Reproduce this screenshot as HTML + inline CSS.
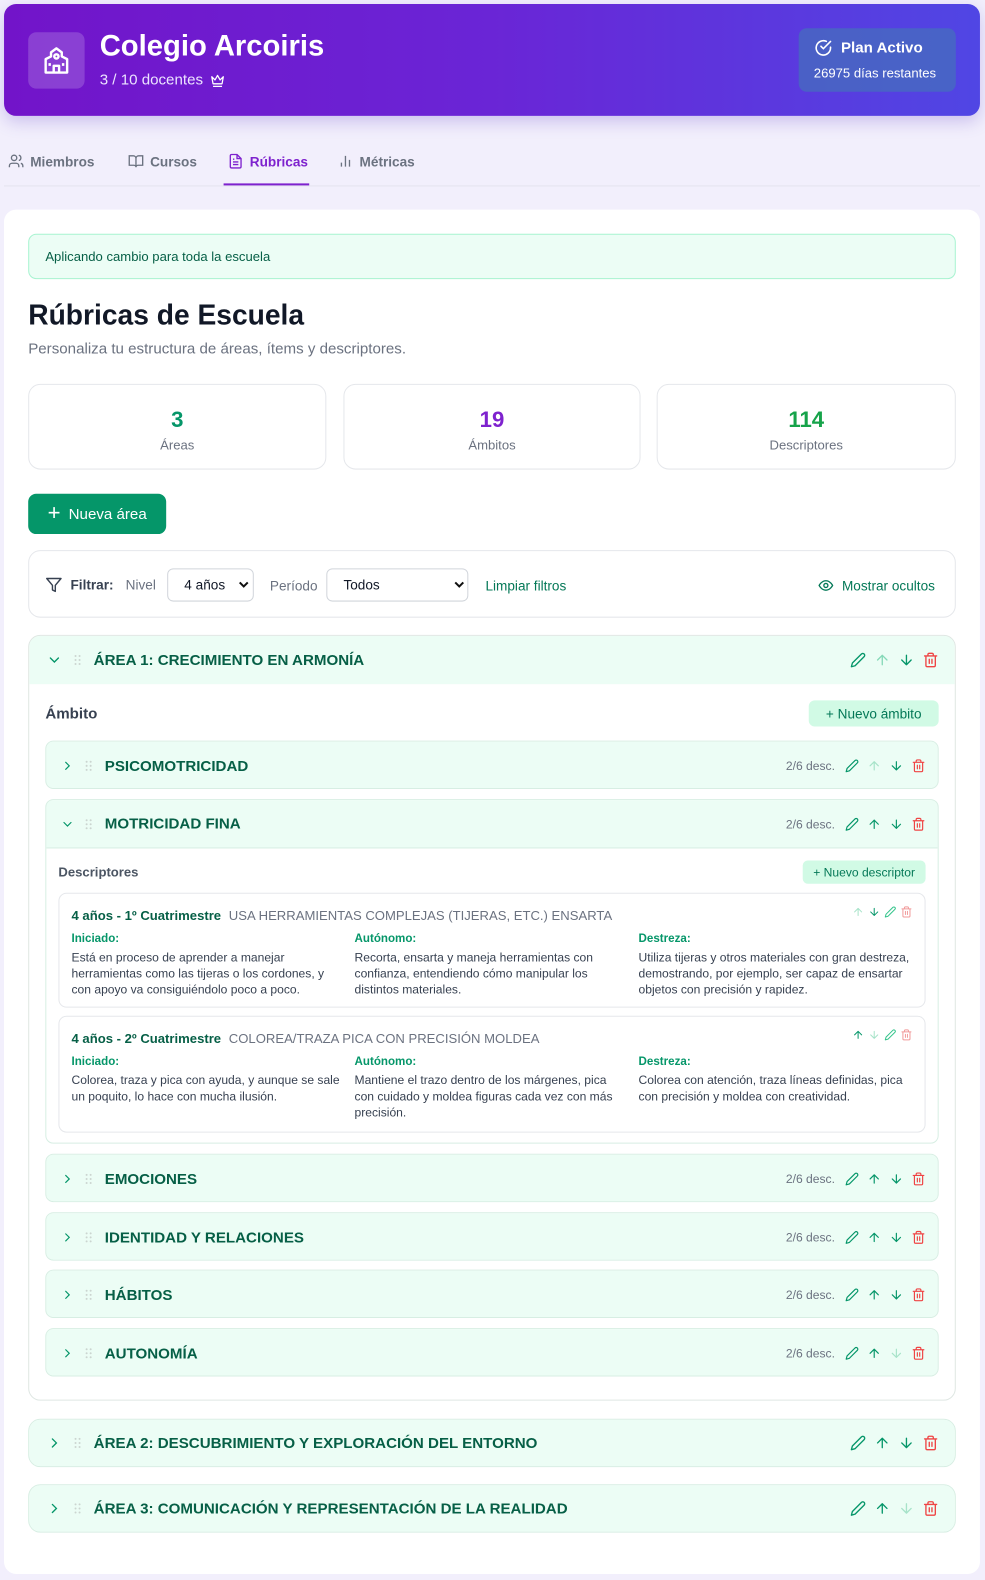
<!DOCTYPE html>
<html><head><meta charset="utf-8"><style>
*{box-sizing:border-box;margin:0;padding:0}
body{width:985px;height:1580px;background:#f2effc;font-family:"Liberation Sans",sans-serif;position:relative;overflow:hidden;color:#111827}
#w{position:absolute;left:0;top:0;width:978px;height:1568px;transform:scale(1.00716,1.00765);transform-origin:0 0}
.a{position:absolute}
.hdr{left:4px;top:4px;width:969px;height:111px;border-radius:12px;background:linear-gradient(90deg,#7214c9,#6a25d6 50%,#5046e4);box-shadow:0 6px 16px rgba(90,60,200,.25)}
.ib{left:24px;top:28px;width:56px;height:56px;border-radius:8px;background:rgba(255,255,255,.18);display:flex;align-items:center;justify-content:center}
.ttl{left:95px;top:26px;color:#fff;font-size:29px;font-weight:bold}
.sub{left:95px;top:67px;color:#ece4ff;font-size:15px;display:flex;gap:6px;align-items:center}
.plan{left:789px;top:24px;width:156px;height:63px;border-radius:8px;background:rgba(70,110,190,.75);color:#fff;padding:10px 15px}
.tabs{left:4px;top:140px;width:969px;height:45px;border-bottom:1px solid #e4e2ee}
.tab{position:absolute;top:12px;font-size:13.5px;color:#6b7280;display:flex;align-items:center;gap:6px;font-weight:bold}
.card{left:4px;top:208px;width:969px;height:1354px;background:#fff;border-radius:12px}
.box{border:1px solid #e5e7eb;border-radius:12px;background:#fff}
.stat{top:381px;height:85px;text-align:center}
.stat b{display:block;font-size:22px;margin-top:22px}
.stat span{display:block;font-size:13px;color:#6b7280;margin-top:4px}
.g{color:#065f46}
.hrow{display:flex;align-items:center;background:#ecfdf5;height:48px}
.t{font-size:15px;font-weight:bold;color:#065f46}
.ic{display:flex;gap:6px;align-items:center;position:absolute;right:12px}
.amb{position:absolute;left:45px;width:887px;border:1px solid #d7eee3;border-radius:8px;overflow:hidden}
.amb .hrow{position:relative}
.cnt{font-size:12px;color:#6b7280;margin-right:4px}
.dc{position:absolute;left:58px;width:861px;border:1px solid #e5e7eb;border-radius:8px}
.dc .h{position:absolute;left:12px;top:14px;font-size:13px}
.col{position:absolute;width:272px;font-size:12px;line-height:16px;color:#374151;top:37px}
.col i{font-style:normal;display:block;color:#059669;font-weight:bold;font-size:11.5px;margin-bottom:2px}
</style></head><body><div id="w">
<svg width="0" height="0" style="position:absolute"><defs>
<symbol id="pen" viewBox="0 0 24 24"><path d="M17 3a2.8 2.8 0 0 1 4 4L7.5 20.5 2 22l1.5-5.5Z" fill="none" stroke="currentColor" stroke-width="2" stroke-linecap="round" stroke-linejoin="round"/></symbol>
<symbol id="up" viewBox="0 0 24 24"><path d="M12 19V5M5 12l7-7 7 7" fill="none" stroke="currentColor" stroke-width="2" stroke-linecap="round" stroke-linejoin="round"/></symbol>
<symbol id="dn" viewBox="0 0 24 24"><path d="M12 5v14M19 12l-7 7-7-7" fill="none" stroke="currentColor" stroke-width="2" stroke-linecap="round" stroke-linejoin="round"/></symbol>
<symbol id="tr" viewBox="0 0 24 24"><path d="M3 6h18M19 6v14a2 2 0 0 1-2 2H7a2 2 0 0 1-2-2V6M8 6V4a2 2 0 0 1 2-2h4a2 2 0 0 1 2 2v2M10 11v6M14 11v6" fill="none" stroke="currentColor" stroke-width="2" stroke-linecap="round" stroke-linejoin="round"/></symbol>
<symbol id="chr" viewBox="0 0 24 24"><path d="M9 6l6 6-6 6" fill="none" stroke="currentColor" stroke-width="2" stroke-linecap="round"/></symbol>
<symbol id="chd" viewBox="0 0 24 24"><path d="M6 9l6 6 6-6" fill="none" stroke="currentColor" stroke-width="2" stroke-linecap="round"/></symbol>
<symbol id="grip" viewBox="0 0 8 12"><g fill="#cbd5d0"><circle cx="2" cy="2" r="1"/><circle cx="6" cy="2" r="1"/><circle cx="2" cy="6" r="1"/><circle cx="6" cy="6" r="1"/><circle cx="2" cy="10" r="1"/><circle cx="6" cy="10" r="1"/></g></symbol>
</defs></svg>

<div class="a hdr">
 <div class="a ib"><svg width="32" height="32" viewBox="0 0 24 24" fill="none" stroke="#fff" stroke-width="1.8" stroke-linejoin="round"><path d="M4 21V11l4-2V6l4-3 4 3v3l4 2v10Z"/><circle cx="12" cy="9" r="1.6"/><path d="M10 21v-5h4v5M7 14v2M17 14v2"/></svg></div>
 <div class="a ttl">Colegio Arcoiris</div>
 <div class="a sub">3 / 10 docentes <svg width="16" height="14" viewBox="0 0 24 22" fill="none" stroke="#fff" stroke-width="2" stroke-linejoin="round"><path d="M3 5l5 5 4-7 4 7 5-5-2 11H5Z M5 20h14"/></svg></div>
 <div class="a plan"><div style="display:flex;align-items:center;gap:8px;font-weight:bold;font-size:15px"><svg width="19" height="19" viewBox="0 0 24 24" fill="none" stroke="#fff" stroke-width="2" stroke-linecap="round"><path d="M21 11.1V12a9 9 0 1 1-5.3-8.2"/><path d="M21 4 12 13l-3-3"/></svg>Plan Activo</div><div style="font-size:13px;margin-top:8px">26975 días restantes</div></div>
</div>

<div class="a tabs">
 <div class="tab" style="left:4px"><svg width="16" height="16" viewBox="0 0 24 24" fill="none" stroke="#6b7280" stroke-width="2"><circle cx="9" cy="7" r="4"/><path d="M2 21v-2a4 4 0 0 1 4-4h6a4 4 0 0 1 4 4v2M16 3.1a4 4 0 0 1 0 7.8M22 21v-2a4 4 0 0 0-3-3.9"/></svg>Miembros</div>
 <div class="tab" style="left:123px"><svg width="16" height="16" viewBox="0 0 24 24" fill="none" stroke="#6b7280" stroke-width="2"><path d="M2 4h6a4 4 0 0 1 4 4v13a3 3 0 0 0-3-3H2ZM22 4h-6a4 4 0 0 0-4 4v13a3 3 0 0 1 3-3h7Z"/></svg>Cursos</div>
 <div class="tab" style="left:222px;color:#7e22ce"><svg width="16" height="16" viewBox="0 0 24 24" fill="none" stroke="#7e22ce" stroke-width="2"><path d="M14 2H6a2 2 0 0 0-2 2v16a2 2 0 0 0 2 2h12a2 2 0 0 0 2-2V8Z M14 2v6h6M16 13H8M16 17H8M10 9H8"/></svg>Rúbricas</div>
 <div class="a" style="left:218px;top:42px;width:85px;height:2px;background:#7e22ce"></div>
 <div class="tab" style="left:331px"><svg width="16" height="16" viewBox="0 0 24 24" fill="none" stroke="#6b7280" stroke-width="2"><path d="M6 20v-6M12 20V4M18 20v-10"/></svg>Métricas</div>
</div>

<div class="a card"></div>
<div class="a" style="left:28px;top:232px;width:921px;height:45px;background:#ecfdf5;border:1px solid #a7f3d0;border-radius:8px;font-size:13px;color:#065f46;padding:14px 16px">Aplicando cambio para toda la escuela</div>
<div class="a" style="left:28px;top:297px;font-size:28px;font-weight:bold">Rúbricas de Escuela</div>
<div class="a" style="left:28px;top:338px;font-size:15px;color:#6b7280">Personaliza tu estructura de áreas, ítems y descriptores.</div>

<div class="a box stat" style="left:28px;width:296px"><b style="color:#059669">3</b><span>Áreas</span></div>
<div class="a box stat" style="left:341px;width:295px"><b style="color:#7e22ce">19</b><span>Ámbitos</span></div>
<div class="a box stat" style="left:652px;width:297px"><b style="color:#16a34a">114</b><span>Descriptores</span></div>

<div class="a" style="left:28px;top:490px;width:137px;height:40px;background:#059669;border-radius:8px;color:#fff;font-size:15px;display:flex;align-items:center;justify-content:center;gap:8px"><span style="font-size:22px;line-height:1;margin-top:-3px">+</span>Nueva área</div>

<div class="a box" style="left:28px;top:546px;width:921px;height:67px"></div>
<div class="a" style="left:45px;top:572px;display:flex;align-items:center;gap:8px;font-size:13.5px">
 <svg width="17" height="17" viewBox="0 0 24 24" fill="none" stroke="#374151" stroke-width="2" stroke-linejoin="round"><path d="M22 3H2l8 9.5V19l4 2v-8.5Z"/></svg><b style="color:#374151">Filtrar:</b><span style="color:#6b7280;margin-left:4px">Nivel</span></div>
<div class="a" style="left:166px;top:564px;width:86px;height:33px;border:1px solid #d1d5db;border-radius:6px;font-size:13.5px;padding:8px 0 0 16px">4 años</div>
<div class="a" style="left:268px;top:574px;font-size:13.5px;color:#6b7280">Período</div>
<div class="a" style="left:324px;top:564px;width:141px;height:33px;border:1px solid #d1d5db;border-radius:6px;font-size:13.5px;padding:8px 0 0 16px">Todos</div>
<svg class="a" style="left:451px;top:576px" width="10" height="8" viewBox="0 0 10 8"><path d="M1 2l4 4 4-4" fill="none" stroke="#111" stroke-width="2"/></svg>
<svg class="a" style="left:237px;top:576px" width="10" height="8" viewBox="0 0 10 8"><path d="M1 2l4 4 4-4" fill="none" stroke="#111" stroke-width="2"/></svg>
<div class="a" style="left:482px;top:574px;font-size:13.5px;color:#047857">Limpiar filtros</div>
<div class="a" style="left:812px;top:573px;font-size:13.5px;color:#047857;display:flex;gap:8px;align-items:center"><svg width="16" height="16" viewBox="0 0 24 24" fill="none" stroke="#047857" stroke-width="2"><path d="M2 12s3.5-7 10-7 10 7 10 7-3.5 7-10 7S2 12 2 12Z"/><circle cx="12" cy="12" r="3"/></svg>Mostrar ocultos</div>

<div class="a" style="left:28px;top:630px;width:921px;height:760px;border:1px solid #dfe7e3;border-radius:12px;overflow:hidden;background:#fff">
 <div class="hrow" style="position:relative;padding-left:17px">
  <svg width="16" height="16" style="color:#059669"><use href="#chd"/></svg>
  <svg width="8" height="12" style="margin-left:11px"><use href="#grip"/></svg>
  <span class="t" style="margin-left:12px">ÁREA 1: CRECIMIENTO EN ARMONÍA</span>
  <div class="ic" style="right:16px;gap:8px"><svg width="16" height="16" style="color:#059669"><use href="#pen"/></svg><svg width="16" height="16" style="color:#86d9b8"><use href="#up"/></svg><svg width="16" height="16" style="color:#059669"><use href="#dn"/></svg><svg width="16" height="16" style="color:#ef4444"><use href="#tr"/></svg></div>
 </div>
</div>
<div class="a" style="left:45px;top:700px;font-size:15px;font-weight:bold;color:#374151">Ámbito</div>
<div class="a" style="left:803px;top:695px;width:129px;height:26px;background:#d1fae5;border-radius:6px;font-size:13.5px;color:#047857;display:flex;align-items:center;justify-content:center">+ Nuevo ámbito</div>

<div class="amb" style="top:735px;height:48px"><div class="hrow" style="padding-left:14px"><svg width="14" height="14" style="color:#059669"><use href="#chr"/></svg><svg width="8" height="12" style="margin-left:10px"><use href="#grip"/></svg><span class="t" style="margin-left:12px">PSICOMOTRICIDAD</span><div class="ic"><span class="cnt">2/6 desc.</span><svg width="14" height="14" style="color:#059669"><use href="#pen"/></svg><svg width="14" height="14" style="color:#a7e3c9;margin-left:2px"><use href="#up"/></svg><svg width="14" height="14" style="color:#059669;margin-left:2px"><use href="#dn"/></svg><svg width="14" height="14" style="color:#ef4444;margin-left:2px"><use href="#tr"/></svg></div></div></div>

<div class="amb" style="top:793px;height:342px;background:#fff"><div class="hrow" style="padding-left:14px;border-bottom:1px solid #d7eee3"><svg width="14" height="14" style="color:#059669"><use href="#chd"/></svg><svg width="8" height="12" style="margin-left:10px"><use href="#grip"/></svg><span class="t" style="margin-left:12px">MOTRICIDAD FINA</span><div class="ic"><span class="cnt">2/6 desc.</span><svg width="14" height="14" style="color:#059669"><use href="#pen"/></svg><svg width="14" height="14" style="color:#059669;margin-left:2px"><use href="#up"/></svg><svg width="14" height="14" style="color:#059669;margin-left:2px"><use href="#dn"/></svg><svg width="14" height="14" style="color:#ef4444;margin-left:2px"><use href="#tr"/></svg></div></div></div>
<div class="a" style="left:58px;top:858px;font-size:13px;font-weight:bold;color:#4b5563">Descriptores</div>
<div class="a" style="left:797px;top:854px;width:122px;height:23px;background:#d1fae5;border-radius:5px;font-size:12px;color:#047857;display:flex;align-items:center;justify-content:center">+ Nuevo descriptor</div>

<div class="dc" style="top:886px;height:114px">
 <div class="h"><b class="g">4 años - 1º Cuatrimestre</b> <span style="color:#6b7280;margin-left:4px">USA HERRAMIENTAS COMPLEJAS (TIJERAS, ETC.) ENSARTA</span></div>
 <div class="ic" style="top:12px;right:12px;gap:4px"><svg width="12" height="12" style="color:#a7e3c9"><use href="#up"/></svg><svg width="12" height="12" style="color:#059669"><use href="#dn"/></svg><svg width="12" height="12" style="color:#34c48b"><use href="#pen"/></svg><svg width="12" height="12" style="color:#f19999"><use href="#tr"/></svg></div>
 <div class="col" style="left:12px"><i>Iniciado:</i>Está en proceso de aprender a manejar herramientas como las tijeras o los cordones, y con apoyo va consiguiéndolo poco a poco.</div>
 <div class="col" style="left:293px"><i>Autónomo:</i>Recorta, ensarta y maneja herramientas con confianza, entendiendo cómo manipular los distintos materiales.</div>
 <div class="col" style="left:575px;width:278px"><i>Destreza:</i>Utiliza tijeras y otros materiales con gran destreza, demostrando, por ejemplo, ser capaz de ensartar objetos con precisión y rapidez.</div>
</div>
<div class="dc" style="top:1008px;height:116px">
 <div class="h"><b class="g">4 años - 2º Cuatrimestre</b> <span style="color:#6b7280;margin-left:4px">COLOREA/TRAZA PICA CON PRECISIÓN MOLDEA</span></div>
 <div class="ic" style="top:12px;right:12px;gap:4px"><svg width="12" height="12" style="color:#059669"><use href="#up"/></svg><svg width="12" height="12" style="color:#a7e3c9"><use href="#dn"/></svg><svg width="12" height="12" style="color:#34c48b"><use href="#pen"/></svg><svg width="12" height="12" style="color:#f19999"><use href="#tr"/></svg></div>
 <div class="col" style="left:12px"><i>Iniciado:</i>Colorea, traza y pica con ayuda, y aunque se sale un poquito, lo hace con mucha ilusión.</div>
 <div class="col" style="left:293px"><i>Autónomo:</i>Mantiene el trazo dentro de los márgenes, pica con cuidado y moldea figuras cada vez con más precisión.</div>
 <div class="col" style="left:575px;width:278px"><i>Destreza:</i>Colorea con atención, traza líneas definidas, pica con precisión y moldea con creatividad.</div>
</div>

<div class="amb" style="top:1145px;height:48px"><div class="hrow" style="padding-left:14px"><svg width="14" height="14" style="color:#059669"><use href="#chr"/></svg><svg width="8" height="12" style="margin-left:10px"><use href="#grip"/></svg><span class="t" style="margin-left:12px">EMOCIONES</span><div class="ic"><span class="cnt">2/6 desc.</span><svg width="14" height="14" style="color:#059669"><use href="#pen"/></svg><svg width="14" height="14" style="color:#059669;margin-left:2px"><use href="#up"/></svg><svg width="14" height="14" style="color:#059669;margin-left:2px"><use href="#dn"/></svg><svg width="14" height="14" style="color:#ef4444;margin-left:2px"><use href="#tr"/></svg></div></div></div>
<div class="amb" style="top:1203px;height:48px"><div class="hrow" style="padding-left:14px"><svg width="14" height="14" style="color:#059669"><use href="#chr"/></svg><svg width="8" height="12" style="margin-left:10px"><use href="#grip"/></svg><span class="t" style="margin-left:12px">IDENTIDAD Y RELACIONES</span><div class="ic"><span class="cnt">2/6 desc.</span><svg width="14" height="14" style="color:#059669"><use href="#pen"/></svg><svg width="14" height="14" style="color:#059669;margin-left:2px"><use href="#up"/></svg><svg width="14" height="14" style="color:#059669;margin-left:2px"><use href="#dn"/></svg><svg width="14" height="14" style="color:#ef4444;margin-left:2px"><use href="#tr"/></svg></div></div></div>
<div class="amb" style="top:1260px;height:48px"><div class="hrow" style="padding-left:14px"><svg width="14" height="14" style="color:#059669"><use href="#chr"/></svg><svg width="8" height="12" style="margin-left:10px"><use href="#grip"/></svg><span class="t" style="margin-left:12px">HÁBITOS</span><div class="ic"><span class="cnt">2/6 desc.</span><svg width="14" height="14" style="color:#059669"><use href="#pen"/></svg><svg width="14" height="14" style="color:#059669;margin-left:2px"><use href="#up"/></svg><svg width="14" height="14" style="color:#059669;margin-left:2px"><use href="#dn"/></svg><svg width="14" height="14" style="color:#ef4444;margin-left:2px"><use href="#tr"/></svg></div></div></div>
<div class="amb" style="top:1318px;height:48px"><div class="hrow" style="padding-left:14px"><svg width="14" height="14" style="color:#059669"><use href="#chr"/></svg><svg width="8" height="12" style="margin-left:10px"><use href="#grip"/></svg><span class="t" style="margin-left:12px">AUTONOMÍA</span><div class="ic"><span class="cnt">2/6 desc.</span><svg width="14" height="14" style="color:#059669"><use href="#pen"/></svg><svg width="14" height="14" style="color:#059669;margin-left:2px"><use href="#up"/></svg><svg width="14" height="14" style="color:#a7e3c9;margin-left:2px"><use href="#dn"/></svg><svg width="14" height="14" style="color:#ef4444;margin-left:2px"><use href="#tr"/></svg></div></div></div>

<div class="a" style="left:28px;top:1408px;width:921px;height:48px;border:1px solid #d7eee3;border-radius:12px;overflow:hidden"><div class="hrow" style="position:relative;padding-left:17px;height:46px">
  <svg width="16" height="16" style="color:#059669"><use href="#chr"/></svg><svg width="8" height="12" style="margin-left:11px"><use href="#grip"/></svg><span class="t" style="margin-left:12px">ÁREA 2: DESCUBRIMIENTO Y EXPLORACIÓN DEL ENTORNO</span>
  <div class="ic" style="right:16px;gap:8px"><svg width="16" height="16" style="color:#059669"><use href="#pen"/></svg><svg width="16" height="16" style="color:#059669"><use href="#up"/></svg><svg width="16" height="16" style="color:#059669"><use href="#dn"/></svg><svg width="16" height="16" style="color:#ef4444"><use href="#tr"/></svg></div></div></div>
<div class="a" style="left:28px;top:1473px;width:921px;height:48px;border:1px solid #d7eee3;border-radius:12px;overflow:hidden"><div class="hrow" style="position:relative;padding-left:17px;height:46px">
  <svg width="16" height="16" style="color:#059669"><use href="#chr"/></svg><svg width="8" height="12" style="margin-left:11px"><use href="#grip"/></svg><span class="t" style="margin-left:12px">ÁREA 3: COMUNICACIÓN Y REPRESENTACIÓN DE LA REALIDAD</span>
  <div class="ic" style="right:16px;gap:8px"><svg width="16" height="16" style="color:#059669"><use href="#pen"/></svg><svg width="16" height="16" style="color:#059669"><use href="#up"/></svg><svg width="16" height="16" style="color:#a7e3c9"><use href="#dn"/></svg><svg width="16" height="16" style="color:#ef4444"><use href="#tr"/></svg></div></div></div>
</div></body></html>
